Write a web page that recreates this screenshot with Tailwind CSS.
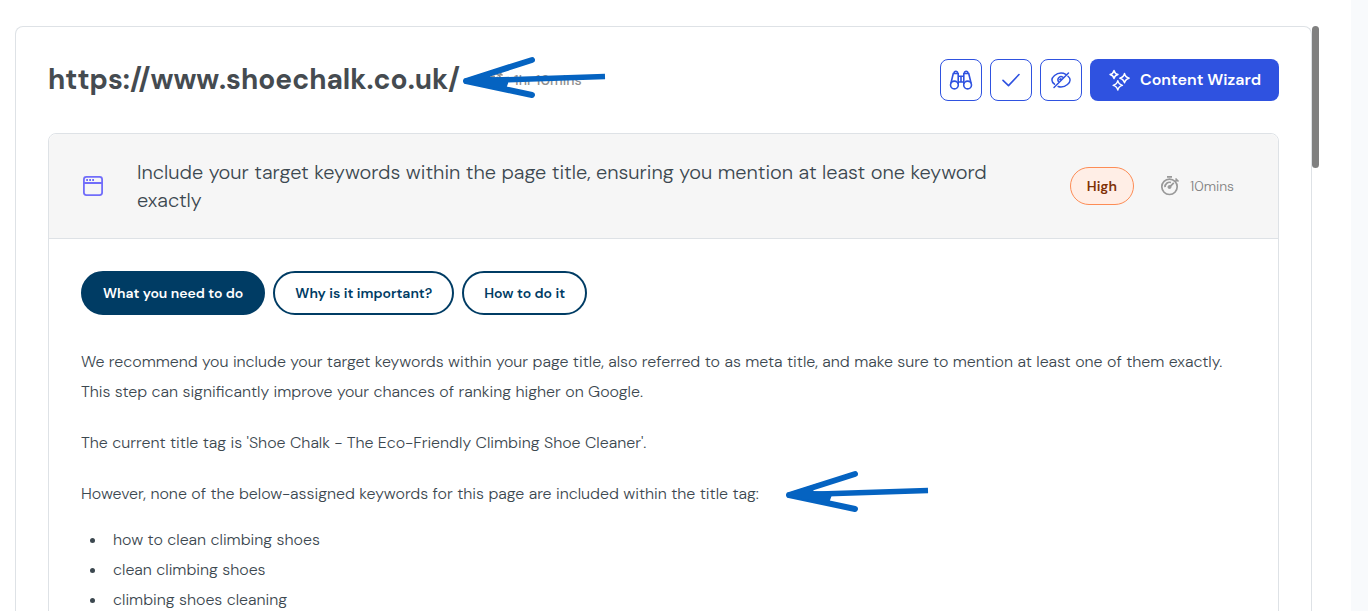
<!DOCTYPE html>
<html lang="en">
<head>
    <meta charset="UTF-8">
    <meta name="viewport" content="width=device-width, initial-scale=1.0">
    <title>Page tasks</title>
    <script src="https://cdn.jsdelivr.net/npm/@tailwindcss/browser@4"></script>
</head>
<body class="h-screen overflow-hidden bg-[#f8fafc] font-['DM_Sans',Inter,sans-serif] font-light text-[#3c4850]">
    <!-- Shared symbols -->
    <svg class="hidden">
        <symbol id="stopwatch" viewBox="0 0 20 20" fill="none" stroke="currentColor" stroke-width="1.7">
            <circle cx="9.5" cy="10.8" r="7.7" />
            <path d="M7 .9h5M15.5 2.500l3 3M16.800 4.100l-1.800 1.800M5 11.100a4.600 4.600 0 0 1 6-4.600M10 10.600l3.800-3.800" />
            <circle cx="9.500" cy="11" r="1.500" fill="currentColor" stroke-width="1" />
        </symbol>
        <symbol id="arrow" viewBox="0 0 150 50">
            <path d="M6 26 72 5M6 26 72 40" fill="none" stroke="#0563c1" stroke-width="6" stroke-linecap="round" />
            <path d="M6 26 145 21.500" fill="none" stroke="#0563c1" stroke-width="5.500" />
            <path d="M5 24 36 14 30 22 50 23 46 34 5 28Z" fill="#0563c1" />
        </symbol>
    </svg>

    <div class="mr-[17px] flex h-screen items-start bg-white pt-[26px] pr-8 pl-[15px]">
        <main class="h-full flex-1 overflow-hidden rounded-t-lg border border-b-0 border-[#dee2e6] p-8">
            <header class="flex items-center justify-between">
                <div class="flex items-center gap-6">
                    <h1 class="text-[28px] leading-[42px] font-bold text-[#454b50]">https://www.shoechalk.co.uk/</h1>
                    <div class="relative flex items-center gap-2.5 text-sm font-medium text-[#8f8f8f]">
                        <svg class="size-5"><use href="#stopwatch" /></svg>
                        <span>1hr 10mins</span>
                        <svg class="absolute top-1/2 -left-6 h-[50px] w-[150px] -translate-y-1/2"><use href="#arrow" /></svg>
                    </div>
                </div>
                <div class="flex gap-2">
                    <button type="button" aria-label="Inspect page" class="flex size-[42px] items-center justify-center rounded-lg border border-[#2f52e0] text-[#2f52e0]">
                        <svg class="size-6" viewBox="0 0 24 24" fill="none" stroke="currentColor" stroke-width="1.6" stroke-linejoin="round">
                            <circle cx="5.400" cy="17" r="3.900" />
                            <circle cx="18.600" cy="17" r="3.900" />
                            <path d="M1.900 15.200 4.400 5M9.200 16V5M22.100 15.200 19.600 5M14.800 16V5M4 5.500h5.400M14.600 5.500H20M5 5.300c.2-2.800 3.400-2.800 3.800 0M15.200 5.300c.4-2.800 3.600-2.800 3.800 0M9.200 8.200h5.600M9.200 14h5.600M12 8.200V14" />
                        </svg>
                    </button>
                    <button type="button" aria-label="Mark as done" class="flex size-[42px] items-center justify-center rounded-lg border border-[#2f52e0] text-[#2f52e0]">
                        <svg class="size-6" viewBox="0 0 24 24" fill="none" stroke="currentColor" stroke-width="1.600" stroke-linecap="round" stroke-linejoin="round">
                            <path d="M4 12.300 9.500 17.600 20 6.500" />
                        </svg>
                    </button>
                    <button type="button" aria-label="Hide page" class="flex size-[42px] items-center justify-center rounded-lg border border-[#2f52e0] text-[#2f52e0]">
                        <svg class="size-6" viewBox="0 0 24 24" fill="none" stroke="currentColor" stroke-width="1.500" stroke-linecap="round" stroke-linejoin="round">
                            <path d="M5.500 16.200C3.900 15 2.900 13.400 2.900 12c0-2.800 4-7 9.100-7 1.800 0 3.400.5 4.800 1.300M19 8.200c1.400 1.200 2.100 2.600 2.100 3.800 0 2.800-4 7-9.100 7-1 0-2-.2-2.900-.5M9.300 13.300a3.200 3.200 0 0 1 4.500-4.200M10.800 11.500l1-.7M5 19.500 19.500 5" />
                        </svg>
                    </button>
                    <button type="button" class="flex h-[42px] items-center gap-2 rounded-lg bg-[#2f52e0] px-[18px] font-semibold text-white">
                        <svg class="size-6" viewBox="0 0 24 24" fill="none" stroke="currentColor" stroke-width="1.400" stroke-linejoin="round">
                            <path d="M6 2.500c.6 2.600 1.400 3.400 4 4-2.600.6-3.400 1.400-4 4-.6-2.600-1.400-3.400-4-4 2.600-.6 3.400-1.400 4-4ZM16.500 5.500c.7 3 1.700 4 4.700 4.700-3 .7-4 1.700-4.700 4.700-.7-3-1.700-4-4.700-4.700 3-.7 4-1.700 4.700-4.700ZM9.800 12.700c.7 3 1.700 4 4.700 4.700-3 .7-4 1.700-4.700 4.700-.7-3-1.700-4-4.700-4.700 3-.7 4-1.700 4.700-4.700Z" />
                        </svg>
                        Content Wizard
                    </button>
                </div>
            </header>

            <section class="mt-8 rounded-lg border border-[#dee2e6]">
                <div class="flex items-center rounded-t-lg border-b border-[#dee2e6] bg-[#f6f6f6] py-6 pr-11 pl-8">
                    <svg class="size-6 shrink-0 text-[#716dfa]" viewBox="0 0 24 24" fill="none" stroke="currentColor" stroke-width="1.800">
                        <rect x="2.900" y="2.900" width="18.200" height="18.200" rx="2.500" />
                        <path d="M3 9h18" />
                        <path d="M5.200 6h1.800M8.200 6H10M11.200 6H13" />
                    </svg>
                    <h2 class="ml-8 flex-1 text-xl leading-7">Include your target keywords within the page title, ensuring you mention at least one keyword exactly</h2>
                    <span class="ml-14 flex h-[38px] w-16 items-center justify-center rounded-full border border-[#fd8c55] bg-[#ffeee6] text-sm font-semibold text-[#7f3206]">High</span>
                    <div class="ml-[26px] flex items-center gap-2.5 text-sm text-[#808080]">
                        <svg class="size-5 text-[#999999]"><use href="#stopwatch" /></svg>
                        <span>10mins</span>
                    </div>
                </div>

                <div class="p-8">
                    <div class="flex gap-2 text-sm font-semibold">
                        <button type="button" class="h-11 rounded-full border-2 border-[#003c64] bg-[#003c64] px-5 text-white">What you need to do</button>
                        <button type="button" class="h-11 rounded-full border-2 border-[#003c64] px-5 text-[#003c64]">Why is it important?</button>
                        <button type="button" class="h-11 rounded-full border-2 border-[#003c64] px-5 text-[#003c64]">How to do it</button>
                    </div>
                    <div class="mt-8 space-y-[21px] text-base leading-[30px]">
                        <p>We recommend you include your target keywords within your page title, also referred to as meta title, and make sure to mention at least one of them exactly. This step can significantly improve your chances of ranking higher on Google.</p>
                        <p>The current title tag is 'Shoe Chalk - The Eco-Friendly Climbing Shoe Cleaner'.</p>
                        <p class="flex items-center gap-6">
                            However, none of the below-assigned keywords for this page are included within the title tag:
                            <svg class="-my-[10px] h-[50px] w-[150px]"><use href="#arrow" /></svg>
                        </p>
                    </div>
                    <ul class="mt-4 list-disc pl-[26px] text-base leading-[30px]">
                        <li class="pl-1.5">how to clean climbing shoes</li>
                        <li class="pl-1.5">clean climbing shoes</li>
                        <li class="pl-1.5">climbing shoes cleaning</li>
                    </ul>
                </div>
            </section>
        </main>
        <div class="h-[142px] w-[7px] rounded-full bg-[#808080]"></div>
    </div>
</body>
</html>
